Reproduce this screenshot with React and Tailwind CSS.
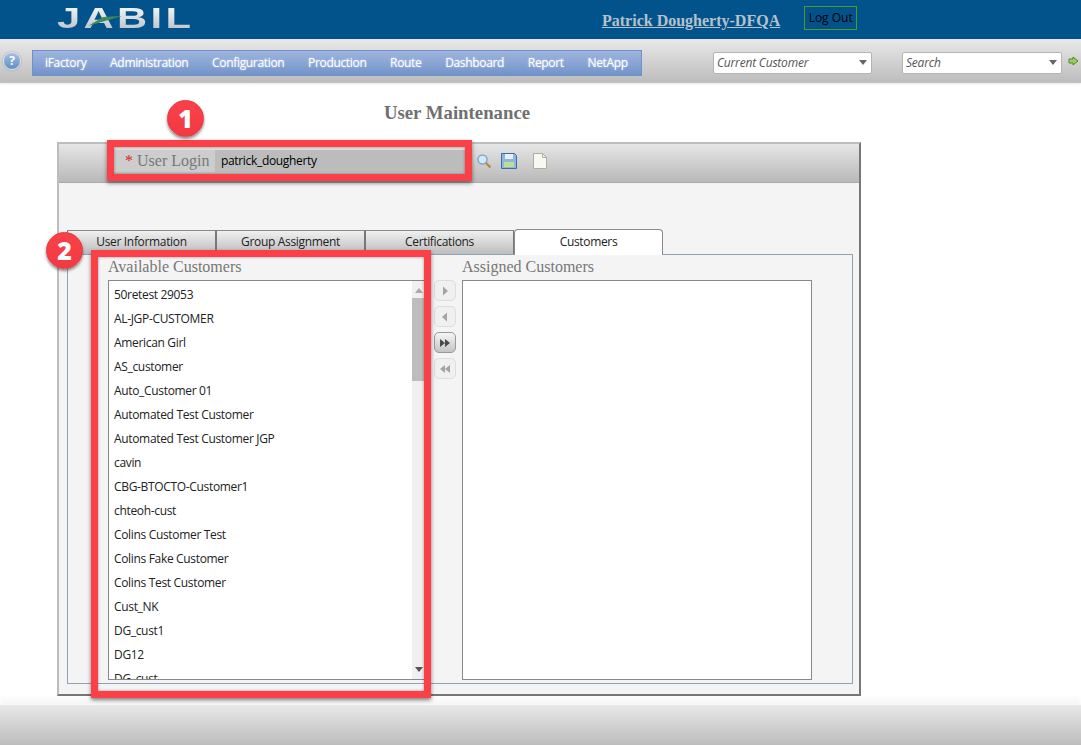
import React from "react";

const customers = ["50retest 29053","AL-JGP-CUSTOMER","American Girl","AS_customer","Auto_Customer 01","Automated Test Customer","Automated Test Customer JGP","cavin","CBG-BTOCTO-Customer1","chteoh-cust","Colins Customer Test","Colins Fake Customer","Colins Test Customer","Cust_NK","DG_cust1","DG12","DG_cust"];
const menu = ["iFactory","Administration","Configuration","Production","Route","Dashboard","Report","NetApp"];

function Select({ label, w }) {
  return (
    <div className={`${w} h-[22px] bg-white border border-[#b4b4b4] rounded-[2px] flex items-center justify-between pl-[3px] pr-[3px]`}>
      <span className="italic text-[12px] tracking-[-0.2px] text-[#555] pt-[1px]">{label}</span>
      <svg width="10" height="6" viewBox="0 0 10 6"><path d="M1 0h8L5 5z" fill="#666" /></svg>
    </div>
  );
}

function Arrow({ dir, double, active }) {
  const fill = active ? "#4a4a4a" : "#a4a4a4";
  const right = dir === "r";
  return (
    <div className={`w-[22px] h-[21px] rounded-[5px] border flex items-center justify-center ${active ? "border-[#999] bg-gradient-to-b from-[#f6f6f6] to-[#c4c4c4]" : "border-[#ddd] bg-[#f0f0f0]"}`}>
      <svg width="14" height="12" viewBox="0 0 14 12">
        {double ? (
          right ? <path d="M2 2l5 4-5 4zM7 2l5 4-5 4z" fill={fill} /> : <path d="M7 2L2 6l5 4zM12 2L7 6l5 4z" fill={fill} />
        ) : right ? <path d="M5 1.500l5 4.500-5 4.500z" fill={fill} /> : <path d="M9 1.500L4 6l5 4.500z" fill={fill} />}
      </svg>
    </div>
  );
}

function Tab({ children }) {
  return (
    <div className="w-[149px] h-[24px] pb-[2px] border border-[#8a8a8a] border-b-0 border-l-[#777] border-r-[#777] bg-gradient-to-b from-[#f0f0f0] via-[#d6d6d6] to-[#bdbdbd] text-[12px] text-[#222] flex items-center justify-center">
      {children}
    </div>
  );
}

function Badge({ n, cls }) {
  return (
    <div className={`absolute ${cls} w-[37px] h-[37px] rounded-full bg-gradient-to-b from-[#fb4048] to-[#f23a43] border border-[#e13a42] shadow-[0_2px_3px_rgba(0,0,0,0.45)] flex items-center justify-center text-white font-extrabold text-[25px] font-['Open_Sans',sans-serif]`}>
      {n}
    </div>
  );
}

export default function App() {
  return (
    <div className="relative h-[745px] w-[1081px] overflow-hidden flex flex-col bg-white tracking-[-0.33px] font-['Open_Sans','Noto_Sans',sans-serif]">
      {/* Header */}
      <header className="h-[39px] shrink-0 bg-[#02538b] flex items-start">
        <div className="relative ml-[57px] mt-[2px] w-[135px] h-[32px]">
          <span className="block origin-left scale-x-[1.44] font-['Liberation_Sans',sans-serif] font-bold text-[29px] leading-[32px] tracking-[2.3px] text-transparent bg-clip-text bg-gradient-to-b from-white to-[#b4bcc4]">JABIL</span>
          <svg className="absolute left-[26px] top-[13px]" width="40" height="14" viewBox="0 0 40 14"><path d="M5 11L39 1 20 2z" fill="#3b8e5a" /></svg>
        </div>
        <a className="ml-[410px] mt-[10px] font-['Liberation_Serif',serif] font-bold tracking-normal text-[16px] leading-[22px] text-[#b5c2cc] underline">Patrick Dougherty-DFQA</a>
        <div className="ml-[24px] mt-[6px] w-[53px] h-[24px] border border-[#4c9a2a] text-[12px] tracking-normal text-black flex items-center justify-center">Log Out</div>
      </header>

      {/* Toolbar */}
      <nav className="h-[44px] shrink-0 bg-gradient-to-b from-[#e9e9e9] to-[#bdbdbd] border-b border-[#c4c4c4] flex items-center shadow-[0_1px_2px_rgba(0,0,0,0.1)]">
        <div className="ml-[3px] w-[18px] h-[18px] rounded-full bg-gradient-to-b from-[#a6bfe0] to-[#5f8fc8] border border-[#d8e3f0] shadow-[0_0_2px_rgba(0,0,0,0.3)] text-white text-[12px] font-bold flex items-center justify-center">?</div>
        <div className="mt-[4px] ml-[11px] w-[610px] h-[26px] pl-[12px] gap-[23.7px] border border-[#6f90c9] bg-gradient-to-b from-[#9db4dc] via-[#89a5d5] to-[#7292c8] flex items-center text-[12px] text-white [text-shadow:0_0_2px_#d5e0f2]">
          {menu.map(m => <span key={m}>{m}</span>)}
        </div>
        <div className="mt-[4px] ml-[71px]"><Select label="Current Customer" w="w-[159px]" /></div>
        <div className="mt-[4px] ml-[30px]"><Select label="Search" w="w-[160px]" /></div>
        <svg className="ml-[6px]" width="11" height="10" viewBox="0 0 11 10"><path d="M1 3h4V1l5 4-5 4V7H1z" fill="#9ccf5f" stroke="#4f8a22" /></svg>
      </nav>

      {/* Main */}
      <main className="flex-1 flex flex-col">
        <h1 className="mt-[18px] w-[914px] text-center font-['Liberation_Serif',serif] font-bold tracking-normal text-[18.800px] leading-[24px] text-[#707070]">User Maintenance</h1>
        <section className="ml-[57px] mt-[17px] w-[804px] h-[554px] border-2 border-[#bdbdbd] border-b-[#777] border-r-[#777] bg-[#f4f4f4] flex flex-col">
          <div className="h-[39px] pb-[5px] shrink-0 bg-gradient-to-b from-[#e6e6e6] to-[#b9b9b9] border-b border-[#aaa] flex items-center">
            <div className="ml-[55px] w-[101px] h-[22px] bg-[#cdcdcd] flex items-center pl-[11px] font-['Liberation_Serif',serif] tracking-normal text-[16px] text-[#777] whitespace-nowrap">
              <span className="text-[#d22] mr-[4px]">*</span>User Login
            </div>
            <div className="w-[250px] h-[22px] bg-[#bcbcbc] flex items-center pl-[6px] text-[12px] text-black">patrick_dougherty</div>
            <svg className="ml-[11px]" width="16" height="16" viewBox="0 0 16 16"><circle cx="6.500" cy="6.500" r="4.500" fill="#d5e8f8" stroke="#7fa8cf" strokeWidth="1.500" /><path d="M10 10l4.500 4.500" stroke="#b8863b" strokeWidth="2.200" /></svg>
            <svg className="ml-[9px]" width="16" height="16" viewBox="0 0 16 16"><path d="M.5.500h13l2 2v13H.5z" fill="#8fb5e0" stroke="#3a6ea8" /><rect x="4" y="1" width="8" height="5" fill="#e8f0f8" /><rect x="3" y="9" width="10" height="5" fill="#bfe08a" /></svg>
            <svg className="ml-[16px]" width="14" height="16" viewBox="0 0 14 16"><path d="M.5.500h9l4 4v11H.5z" fill="#f8f8f0" stroke="#aab0a0" /><path d="M9.500.500v4h4" fill="none" stroke="#aab0a0" /></svg>
          </div>

          <div className="mt-[45px] ml-[8px] h-[26px] shrink-0 flex items-end">
            <Tab>User Information</Tab>
            <Tab>Group Assignment</Tab>
            <Tab>Certifications</Tab>
            <div className="w-[149px] h-[26px] pb-[1px] -mb-px relative bg-white border border-[#8a8a8a] border-b-0 rounded-t-[4px] text-[12px] text-[#222] flex items-center justify-center">Customers</div>
          </div>

          <div className="ml-[8px] w-[786px] h-[430px] border border-[#8fa3b8] flex">
            <div className="ml-[40px] w-[318px] flex flex-col">
              <div className="h-[25px] font-['Liberation_Serif',serif] tracking-normal text-[16px] leading-[24px] text-[#777]">Available Customers</div>
              <div className="h-[400px] border border-[#888] bg-white flex overflow-hidden">
                <ul className="flex-1 pt-[2px] pl-[5px] text-[12px] text-[#222] overflow-hidden">
                  {customers.map(c => <li key={c} className="h-[24px] leading-[24px] whitespace-nowrap">{c}</li>)}
                </ul>
                <div className="w-[13px] bg-[#f0f0f0] flex flex-col items-center">
                  <svg className="mt-[7px]" width="8" height="5" viewBox="0 0 8 5"><path d="M4 0l4 5H0z" fill="#aaa" /></svg>
                  <div className="mt-[5px] w-full h-[83px] bg-[#bdbdbd]" />
                  <svg className="mt-[286px]" width="8" height="5" viewBox="0 0 8 5"><path d="M0 0h8L4 5z" fill="#555" /></svg>
                </div>
              </div>
            </div>
            <div className="ml-[8px] mt-[25px] w-[22px] flex flex-col gap-[5px]">
              <Arrow dir="r" />
              <Arrow dir="l" />
              <Arrow dir="r" double active />
              <Arrow dir="l" double />
            </div>
            <div className="ml-[6px] w-[350px] flex flex-col">
              <div className="h-[25px] font-['Liberation_Serif',serif] tracking-normal text-[16px] leading-[24px] text-[#777]">Assigned Customers</div>
              <div className="h-[400px] border border-[#888] bg-white" />
            </div>
          </div>
        </section>
      </main>

      <footer className="h-[41px] shrink-0 border-t border-[#f8f8f8] bg-gradient-to-b from-[#e8e8e8] to-[#bdbdbd] shadow-[0_-5px_6px_rgba(0,0,0,0.04)]" />

      {/* Annotations */}
      <div className="absolute left-[107px] top-[140px] w-[365px] h-[41px] border-[7px] border-[#fb4048] shadow-[0_2px_4px_rgba(0,0,0,0.5),inset_0_0_3px_rgba(0,0,0,0.4)]" />
      <div className="absolute left-[91px] top-[250px] w-[340px] h-[448px] border-[7px] border-[#fb4048] shadow-[0_2px_4px_rgba(0,0,0,0.5),inset_0_0_3px_rgba(0,0,0,0.4)]" />
      <Badge n="1" cls="left-[167px] top-[100px]" />
      <Badge n="2" cls="left-[46px] top-[232px]" />
    </div>
  );
}
